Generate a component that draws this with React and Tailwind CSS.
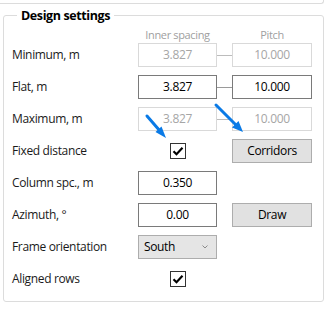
import React from "react";

function Check() {
  return (
    <div className="w-[16px] h-[16px] border border-[#333333] bg-white flex items-center justify-center">
      <svg width="12" height="10" viewBox="0 0 12 10">
        <path d="M1.5 5.2 L4.5 8.2 L10.5 1.8" fill="none" stroke="#000" strokeWidth="2.2" />
      </svg>
    </div>
  );
}

function Field({ value, disabled }) {
  return (
    <div
      className={
        "h-[24px] border flex items-center justify-center bg-white " +
        (disabled ? "border-[#d9d9d9] text-[#a6a6a6]" : "border-[#7a7a7a] text-black")
      }
    >
      {value}
    </div>
  );
}

function Connector({ disabled }) {
  return <div className={"h-px " + (disabled ? "bg-[#bcbcbc]" : "bg-[#9a9a9a]")} />;
}

function Btn({ children }) {
  return (
    <div className="h-[24px] border border-[#adadad] bg-[#e1e1e1] flex items-center justify-center text-black">
      {children}
    </div>
  );
}

function Label({ children }) {
  return <div className="h-[24px] flex items-center text-[#1a1a1a]">{children}</div>;
}

export default function App() {
  return (
    <div className="relative w-[331px] h-[313px] overflow-hidden bg-white font-['Open_Sans',sans-serif] text-[12px] tracking-[-0.35px]">
      <div className="w-[324px] h-[4px] border-b border-r border-[#dcdcdc] rounded-br-[3px]" />

      <div className="relative mt-[11px] ml-[3px] w-[321px] h-[287px] border border-[#dcdcdc] rounded-[3px] pl-[8px] pt-[11px]">
        <div className="absolute left-[13px] top-[-9px] bg-white px-[4px] font-bold text-[12.5px] leading-[17px] tracking-[-0.4px] text-black">
          Design settings
        </div>

        <div className="grid grid-cols-[126px_79px_15px_80px] h-[16px] items-end text-[11px] leading-[16px] text-[#a0a0a0]">
          <div />
          <div className="text-center">Inner spacing</div>
          <div />
          <div className="text-center">Pitch</div>
        </div>

        <div className="grid grid-cols-[126px_79px_15px_80px] gap-y-[8px] items-center">
          <Label>Minimum, m</Label>
          <Field value="3.827" disabled />
          <Connector disabled />
          <Field value="10.000" disabled />

          <Label>Flat, m</Label>
          <Field value="3.827" />
          <Connector />
          <Field value="10.000" />

          <Label>Maximum, m</Label>
          <Field value="3.827" disabled />
          <Connector disabled />
          <Field value="10.000" disabled />

          <Label>Fixed distance</Label>
          <div className="flex justify-center">
            <Check />
          </div>
          <div />
          <Btn>Corridors</Btn>

          <Label>Column spc., m</Label>
          <Field value="0.350" />
          <div />
          <div />

          <Label>Azimuth, °</Label>
          <Field value="0.00" />
          <div />
          <Btn>Draw</Btn>

          <Label>Frame orientation</Label>
          <div className="h-[24px] border border-[#adadad] bg-[#e5e5e5] flex items-center justify-between pl-[5px] pr-[8px] text-black">
            <span>South</span>
            <svg width="6" height="4" viewBox="0 0 6 4">
              <path d="M0.5 0.5 L3 3 L5.5 0.5" fill="none" stroke="#8a8a8a" strokeWidth="1" />
            </svg>
          </div>
          <div />
          <div />

          <Label>Aligned rows</Label>
          <div className="flex justify-center">
            <Check />
          </div>
          <div />
          <div />
        </div>
      </div>

      <div className="mt-[8px] ml-[16px] px-[4px] font-bold text-[12.5px] leading-[17px] tracking-[-0.4px] text-black">
        Height settings
      </div>

      <svg className="absolute left-0 top-0 pointer-events-none" width="331" height="313" viewBox="0 0 331 313">
        <g stroke="#0a7ae6" strokeWidth="3" fill="#0a7ae6" strokeLinecap="round">
          <line x1="147" y1="116" x2="160" y2="131" />
          <path d="M166 138 L155.5 132 L161.5 126.5 Z" stroke="none" />
          <line x1="216" y1="105" x2="236" y2="125" />
          <path d="M243 132 L232 127.5 L238.5 121 Z" stroke="none" />
        </g>
      </svg>
    </div>
  );
}
